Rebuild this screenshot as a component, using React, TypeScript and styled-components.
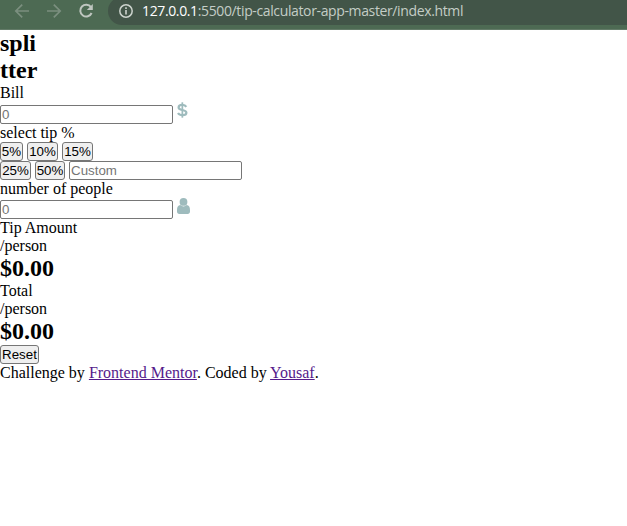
import React from "react";
import styled, { createGlobalStyle } from "styled-components";

const GlobalStyle = createGlobalStyle`
  * { box-sizing: border-box; margin: 0; padding: 0; }
  body {
    background: #fff;
    color: #000;
    font: 16px/18px "Liberation Serif", "Times New Roman", serif;
    overflow: hidden;
  }
`;

const Toolbar = styled.header`
  display: flex;
  align-items: flex-start;
  height: 30px;
  background: #4d6a53;
  border-bottom: 1px solid #637b68;
  overflow: hidden;
`;

const NavIcons = styled.div`
  display: flex;
  flex: none;
  width: 108px;
  height: 22px;
  padding-left: 12px;
  gap: 12px;
`;

const NavIcon = styled.svg<{ $dim?: boolean }>`
  flex: none;
  width: 20px;
  height: 22px;
  fill: none;
  stroke: ${(p) => (p.$dim ? "#7b8f7f" : "#bfc6c0")};
  stroke-width: ${(p) => (p.$dim ? 1.7 : 2)};
`;

const AddressBar = styled.div`
  display: flex;
  flex: 1;
  height: 28px;
  margin-top: -3px;
  padding: 3px 0 0 10px;
  background: #425548;
  border-radius: 14px 0 0 14px;
`;

const InfoIcon = styled.svg`
  flex: none;
  width: 16px;
  height: 22px;
  margin-right: 8px;
`;

const Url = styled.span`
  font: 14px/22px "Open Sans", "Noto Sans", sans-serif;
  letter-spacing: -0.37px;
  white-space: nowrap;
  color: #c4cdc6;
`;

const Host = styled.span`
  color: #fff;
`;

const Title = styled.h2`
  font-size: 24px;
  line-height: 27px;
`;

const Line = styled.p`
  height: 18px;
  white-space: nowrap;
`;

const Field = styled.div<{ $height: number }>`
  display: flex;
  align-items: flex-end;
  gap: 4px;
  height: ${(p) => p.$height}px;
`;

const TextInput = styled.input`
  width: 173px;
  height: 19px;
  padding: 1px;
  border: 1px solid #767676;
  border-radius: 2px;
  background: #fff;
  font: 13.333px/15px "Liberation Sans", Arial, sans-serif;
  outline: none;
  &::placeholder { color: #757575; }
`;

const FieldIcon = styled.svg<{ $width: number; $lift: number }>`
  flex: none;
  width: ${(p) => p.$width}px;
  height: 16px;
  margin-bottom: ${(p) => p.$lift}px;
  fill: #9ebbbd;
`;

const Options = styled.div`
  display: flex;
  gap: 4px;
  height: 19px;
`;

const Button = styled.button<{ $width: number }>`
  width: ${(p) => p.$width}px;
  height: 19px;
  border: 1px solid #767676;
  border-radius: 3px;
  background: #efefef;
  color: #000;
  font: 13.333px/15px "Liberation Sans", Arial, sans-serif;
  white-space: nowrap;
`;

const Footer = styled.footer`
  height: 18px;
  white-space: nowrap;
`;

const Link = styled.a`
  color: #551a8b;
  text-decoration: underline;
`;

function BrowserBar() {
  return (
    <Toolbar>
      <NavIcons>
        <NavIcon $dim viewBox="0 0 20 22">
          <path d="M17 11H4M10.2 4.6 3.8 11l6.4 6.4" />
        </NavIcon>
        <NavIcon $dim viewBox="0 0 20 22">
          <path d="M3 11h13M9.8 4.6l6.4 6.4-6.4 6.4" />
        </NavIcon>
        <NavIcon viewBox="0 0 20 22">
          <path d="M15 7.2A5.9 5.9 0 1 0 15.6 13" />
          <path d="M16.8 4v6h-6z" fill="#bfc6c0" stroke="none" />
        </NavIcon>
      </NavIcons>
      <AddressBar>
        <InfoIcon viewBox="0 0 16 22">
          <circle cx="8" cy="11" r="6.2" fill="none" stroke="#ccd3cd" strokeWidth="1.5" />
          <path d="M8 10v4.5M8 7.3v1.6" stroke="#ccd3cd" strokeWidth="1.6" />
        </InfoIcon>
        <Url>
          <Host>127.0.0.1</Host>:5500/tip-calculator-app-master/index.html
        </Url>
      </AddressBar>
    </Toolbar>
  );
}

function DollarIcon() {
  return (
    <FieldIcon $width={11} $lift={6} viewBox="0 0 11 16">
      <path
        d="M9.3 4.900C8.500 3.500 7 2.900 5.300 2.900 3.200 2.900 1.600 3.800 1.600 5.400c0 1.700 1.500 2.100 3.700 2.600s4.100.9 4.100 2.700c0 1.600-1.600 2.500-4 2.500-1.900 0-3.500-.7-4.400-2.200"
        fill="none"
        stroke="#9ebbbd"
        strokeWidth="2.200"
      />
      <path d="M4.500.300h1.700v15.400H4.500z" />
    </FieldIcon>
  );
}

function PersonIcon() {
  return (
    <FieldIcon $width={13} $lift={5} viewBox="0 0 13 16">
      <circle cx="6.500" cy="3.900" r="3.900" />
      <path d="M3.300 7.100c1.800 1.700 4.600 1.700 6.400 0 2.300.2 3.300 2.100 3.300 5.200v1.300c0 1.500-.9 2.400-2.300 2.400H2.300C.9 16 0 15.100 0 13.600v-1.300c0-3.100 1-5 3.300-5.200" />
    </FieldIcon>
  );
}

function Result({ label }: { label: string }) {
  return (
    <section>
      <Line>{label}</Line>
      <Line>/person</Line>
      <Title>$0.00</Title>
    </section>
  );
}

export default function App() {
  return (
    <>
      <GlobalStyle />
      <BrowserBar />
      <main>
        <Title>
          spli
          <br />
          tter
        </Title>
        <Line>Bill</Line>
        <Field $height={22}>
          <TextInput placeholder="0" />
          <DollarIcon />
        </Field>
        <Line>select tip %</Line>
        <Options>
          <Button $width={23}>5%</Button>
          <Button $width={31}>10%</Button>
          <Button $width={31}>15%</Button>
        </Options>
        <Options>
          <Button $width={31}>25%</Button>
          <Button $width={30}>50%</Button>
          <TextInput placeholder="Custom" />
        </Options>
        <Line>number of people</Line>
        <Field $height={21}>
          <TextInput placeholder="0" />
          <PersonIcon />
        </Field>
        <Result label="Tip Amount" />
        <Result label="Total" />
        <Button $width={39}>Reset</Button>
        <Footer>
          Challenge by <Link href="#">Frontend Mentor</Link>. Coded by <Link href="#">Yousaf</Link>.
        </Footer>
      </main>
    </>
  );
}
